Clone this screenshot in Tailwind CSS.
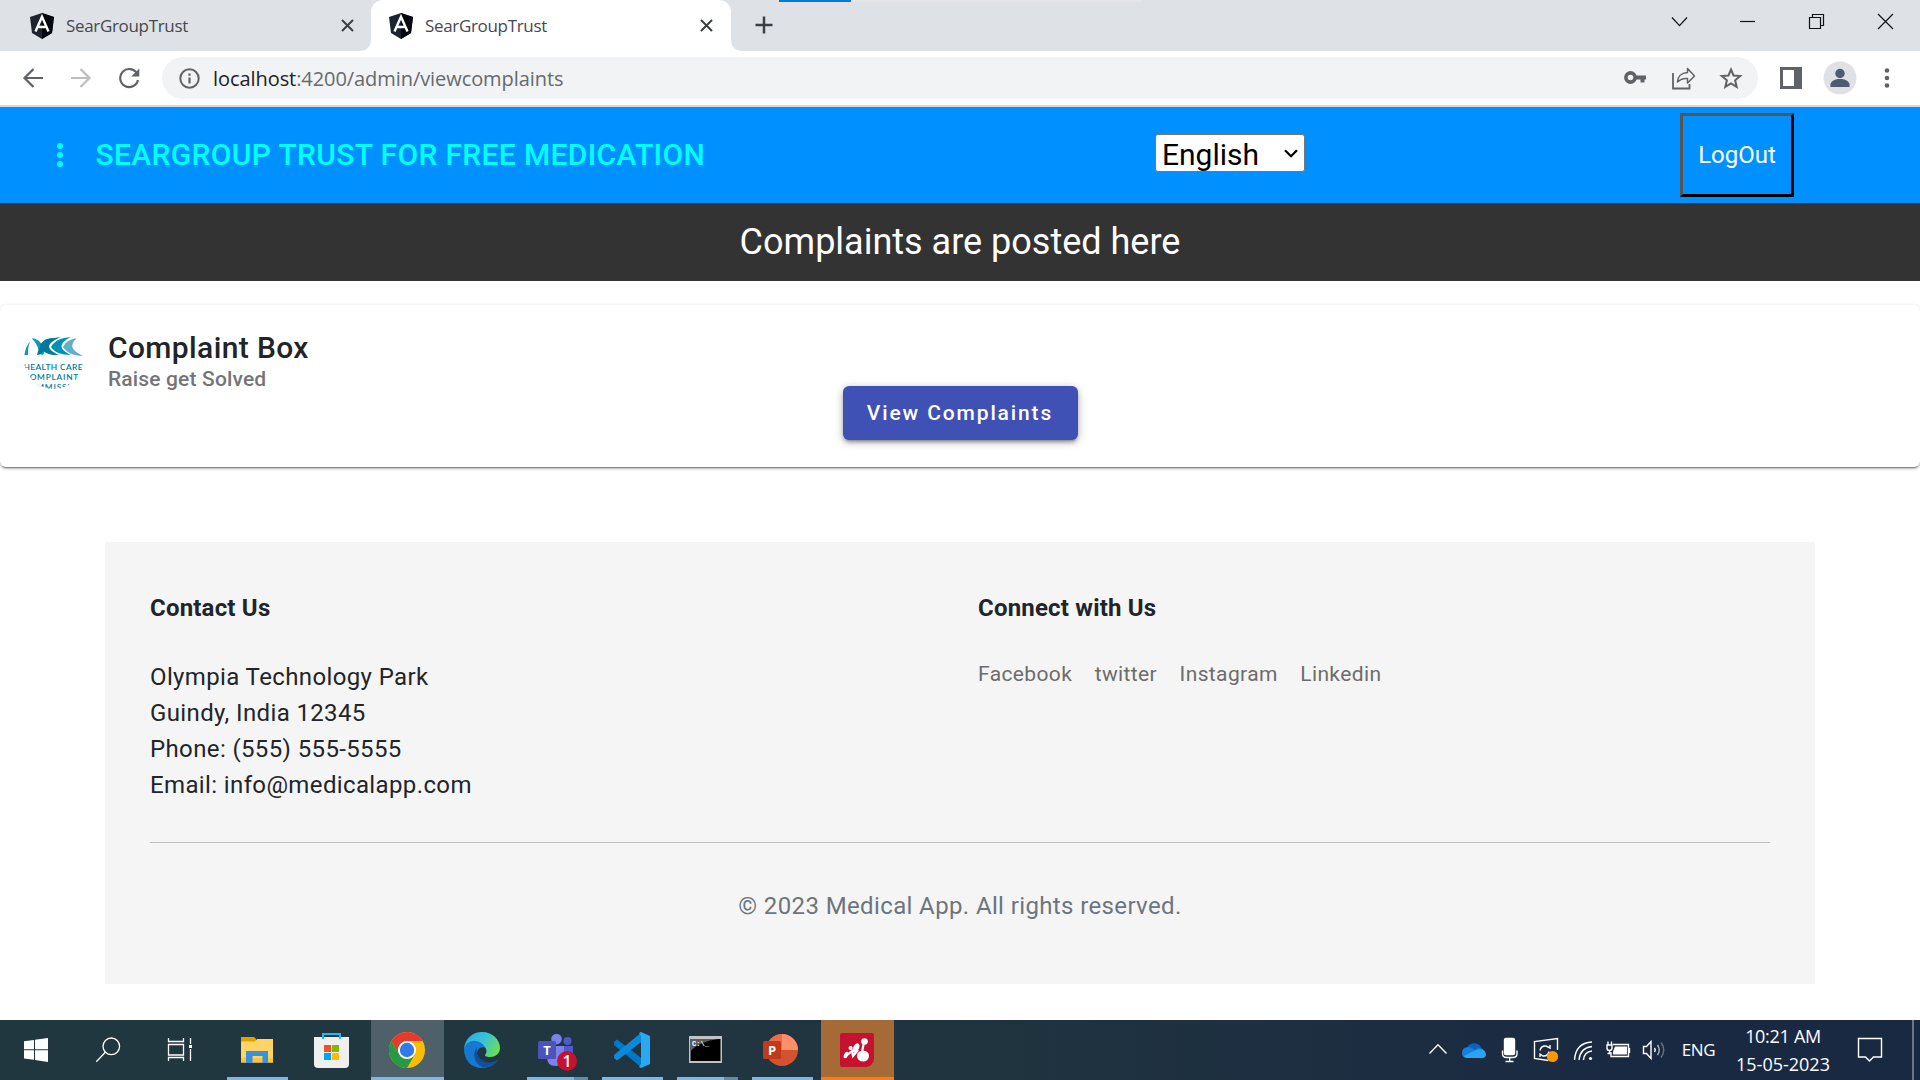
<!DOCTYPE html>
<html lang="en">
<head>
<meta charset="utf-8">
<title>SearGroupTrust</title>
<script src="https://cdn.jsdelivr.net/npm/@tailwindcss/browser@4"></script>
</head>
<body class="w-[1920px] h-[1080px] overflow-hidden bg-white font-[Roboto,sans-serif] text-[#212529] flex flex-col">

<!-- Tab strip -->
<header class="relative h-[51px] shrink-0 bg-[#dee1e6] flex font-['Open_Sans',sans-serif] text-[#45494d]">
  <div class="absolute left-[779px] top-0 h-0.5 w-[362px] bg-[#e6e6e8]"><div class="h-full w-[72px] bg-[#0078d7]"></div></div>
  <div class="w-[371px] pl-[30px] pr-4 flex items-center">
    <svg class="w-6 h-[26px] mt-px" viewBox="0 0 24 26"><path fill="#1c2430" d="M12 0 24 4 22 20 12 26 2 20 0 4z"/><path fill="#05070f" d="M12 0 24 4 22 20 12 26z"/><path fill="none" stroke="#fff" stroke-width="2.4" d="M5.500 18.500 12 3.800 18.500 18.500M8.500 14H15.500"/></svg>
    <span class="ml-3 text-[17px] tracking-[-0.33px] leading-6">SearGroupTrust</span>
    <svg class="ml-auto w-[15px] h-[15px]" viewBox="0 0 15 15"><path stroke="#3c4043" stroke-width="2" d="m2 2 11 11M13 2 2 13"/></svg>
  </div>
  <div class="relative w-[360px] pl-[18px] pr-[17px] flex items-center bg-white rounded-t-xl">
    <svg class="absolute -left-3 bottom-0 w-3 h-3" viewBox="0 0 12 12"><path fill="#fff" d="M12 0v12H0Q12 12 12 0"/></svg>
    <svg class="absolute -right-3 bottom-0 w-3 h-3" viewBox="0 0 12 12"><path fill="#fff" d="M0 0v12h12Q0 12 0 0"/></svg>
    <svg class="w-6 h-[26px] mt-px" viewBox="0 0 24 26"><path fill="#1c2430" d="M12 0 24 4 22 20 12 26 2 20 0 4z"/><path fill="#05070f" d="M12 0 24 4 22 20 12 26z"/><path fill="none" stroke="#fff" stroke-width="2.4" d="M5.500 18.500 12 3.800 18.500 18.500M8.500 14H15.500"/></svg>
    <span class="ml-3 text-[17px] tracking-[-0.33px] leading-6">SearGroupTrust</span>
    <svg class="ml-auto w-[15px] h-[15px]" viewBox="0 0 15 15"><path stroke="#3c4043" stroke-width="2" d="m2 2 11 11M13 2 2 13"/></svg>
  </div>
  <svg class="ml-[24px] mt-[16px] w-[18px] h-[18px]" viewBox="0 0 18 18"><path stroke="#3c4043" stroke-width="2.500" d="M9 .5v17M.5 9h17"/></svg>
  <svg class="ml-auto w-[258px] h-[51px]" viewBox="1662 0 258 51" fill="none" stroke="#111" stroke-width="1.200"><path d="m1672 17.500 7.500 8.200 7.500-8.200"/><path d="M1740 21.500h15"/><path d="M1809.500 17.500h11v11h-11zM1812.500 17.500v-3h11v11h-3"/><path d="m1878 14 15 15m0-15-15 15"/></svg>
</header>

<!-- Toolbar -->
<div class="h-[56px] shrink-0 bg-white border-b-2 border-[#d8d8da] flex items-center pl-[22px] pr-[26px]">
  <svg class="w-[118px] h-[22px]" viewBox="22 67 118 22" fill="none" stroke-width="2.200"><path stroke="#5f6368" d="M43 78H25M33.500 69 24.500 78l9 9"/><path stroke="#bbbdc0" d="M71 78h18M80.500 69l9 9-9 9"/><path stroke="#5f6368" d="M137 73.500a9 9 0 1 0 1 6.500"/><path fill="#5f6368" d="M139.300 68.500v8h-8z"/></svg>
  <div class="ml-[22px] w-[1596px] h-[42px] rounded-full bg-[#f1f3f4] flex items-center pl-[17px] pr-[15px]">
    <svg class="w-[21px] h-[21px]" viewBox="0 0 21 21"><circle cx="10.500" cy="10.500" r="9.200" fill="none" stroke="#5f6368" stroke-width="2"/><path stroke="#5f6368" stroke-width="2.200" d="M10.500 9.500V15.500M10.500 5.500V7.700"/></svg>
    <span class="ml-[13px] mt-0.5 font-['Open_Sans',sans-serif] text-[20px] leading-7 tracking-[-0.07px] text-[#666a6e]"><span class="text-[#202124]">localhost</span>:4200/admin/viewcomplaints</span>
    <svg class="ml-auto w-[120px] h-[24px]" viewBox="1623 66 120 24" fill="none" stroke="#5f6368" stroke-width="1.800"><circle cx="1630.500" cy="77.500" r="4.600" stroke-width="3.600"/><path stroke-width="4" d="M1635 77.500h11M1642.500 77v5.500"/><path d="M1673 73v15.500h16.500V84"/><path stroke-width="1.500" stroke-linejoin="round" d="M1687.500 68.500 1694.500 76l-7 7v-4.500c-4.500-.5-7.500 1-10 3.500 0-5 3.500-9 10-9.500z"/><path stroke-width="2" d="m1731 69.500 2.500 6 6.700.5-5.100 4.300 1.600 6.500-5.700-3.500-5.700 3.500 1.600-6.500-5.100-4.300 6.700-.5z"/></svg>
  </div>
  <svg class="ml-[21px] w-[24px] h-[24px]" viewBox="1779 66 24 24"><path fill="#5f6368" fill-rule="evenodd" d="M1780 67h22v22h-22zM1783 70v16h11V70z"/></svg>
  <svg class="ml-[20px] w-[34px] h-[34px]" viewBox="0 0 34 34"><circle cx="17" cy="17" r="16.500" fill="#dee1e6"/><circle cx="17" cy="12.500" r="4.700" fill="#4f5b70"/><path fill="#4f5b70" d="M7.500 26v-2.500c0-3.500 5-5.500 9.500-5.500s9.500 2 9.500 5.500V26z"/></svg>
  <svg class="ml-auto w-[14px] h-[24px]" viewBox="0 0 14 24" fill="#5f6368"><circle cx="7" cy="4.500" r="2.300"/><circle cx="7" cy="12" r="2.300"/><circle cx="7" cy="19.500" r="2.300"/></svg>
</div>

<!-- App bar -->
<nav class="h-24 shrink-0 bg-[#0090ff] flex items-center">
  <svg class="ml-[55px] w-[10px] h-[26px]" viewBox="0 0 10 26" fill="#00ffff"><circle cx="5" cy="4" r="3"/><circle cx="5" cy="13" r="3"/><circle cx="5" cy="22" r="3"/></svg>
  <div class="ml-[30.500px] w-[1059.500px] text-[30px] leading-9 tracking-[0.35px] font-medium text-[#00ffff]">SEARGROUP TRUST FOR FREE MEDICATION</div>
  <div class="w-[150px] h-[38px] mt-[-4px] bg-white border border-[#767676] rounded-[3px] flex items-center pl-[6px] pr-[6px] text-[30px] leading-[36px] text-black">
    <span class="mt-[3px]">English</span>
    <svg class="ml-auto w-[14px] h-[9px]" viewBox="0 0 14 9"><path fill="none" stroke="#000" stroke-width="2.200" d="m1 1.200 6 6 6-6"/></svg>
  </div>
  <button class="ml-[375px] w-[114px] h-[84px] border-[3px] border-t-[#555] border-l-[#555] border-r-black border-b-black text-white text-[24px]">LogOut</button>
</nav>
<div class="h-[78px] shrink-0 bg-[#333] text-white text-[36px] text-center leading-[78px]">Complaints are posted here</div>

<!-- Complaint card -->
<section class="mt-6 h-[162px] shrink-0 rounded-md bg-white shadow-[0_3px_1px_-2px_rgba(0,0,0,0.3),0_2px_2px_0_rgba(0,0,0,0.2),0_1px_4px_0_rgba(0,0,0,0.14)] px-6 pt-6">
  <div class="flex h-[57px]">
    <svg class="w-[60px] h-[60px] rounded-full" viewBox="24 329 60 60">
      <path fill="#1298b4" d="M24 355c1-9 3-12 6-13-2 4-2 8-2 13z"/>
      <path fill="#1298b4" d="M31 338c8 1 10 5 15 11l-3 6-4-1c0-6-3-12-8-16z"/>
      <path fill="#007a9c" d="M37 355c2-10 9-17 24-18-16 7-15 12-2 18-8 0-12-2-14-6-3 4-5 6-8 6z"/>
      <path fill="#007a9c" d="M40 345c4-6 8-7 14-7-9 7-6 13 3 17-9 0-15-3-17-10z"/>
      <path fill="#0092b4" d="M51 347c4-7 10-9 20-10-14 7-11 13 0 18-10 0-17-3-20-8z"/>
      <path fill="#62aec8" d="M63 347c3-6 8-8 14-9-8 7-6 12 6 18-10 0-17-4-20-9z"/>
      <g fill="#007a9c" font-family="Lato, sans-serif" font-size="8.300" text-anchor="middle" font-weight="600"><text x="53" y="370" textLength="59">HEALTH CARE</text><text x="53.500" y="380" textLength="60">COMPLAINTS</text><text x="53.500" y="390" textLength="62">COMMISSION</text></g>
    </svg>
    <div class="ml-6 font-medium">
      <div class="text-[30px] leading-[38px] tracking-[0.375px]">Complaint Box</div>
      <div class="text-[21px] leading-[24px] tracking-[0.15px] text-[#757575]">Raise get Solved</div>
    </div>
  </div>
  <div class="flex justify-center"><button class="w-[235px] h-[54px] pt-0.5 rounded-md bg-[#3f51b5] text-white font-medium text-[21px] tracking-[1.875px] shadow-[0_4px_2px_-3px_rgba(0,0,0,0.2),0_3px_3px_0_rgba(0,0,0,0.14),0_2px_8px_0_rgba(0,0,0,0.3)]">View Complaints</button></div>
</section>

<!-- Footer -->
<footer class="mt-[75px] mx-auto w-[1710px] h-[442px] shrink-0 bg-[#f5f5f5] px-[45px] tracking-[0.375px]">
  <div class="h-[301px] border-b border-[#bfc0c1] flex pt-[48px]">
    <div class="w-[828px]">
      <h2 class="text-[24px] leading-[36px] font-bold tracking-[0.2px]">Contact Us</h2>
      <p class="mt-[33px] text-[24px] leading-9">Olympia Technology Park<br>Guindy, India 12345<br>Phone: (555) 555-5555<br>Email: info@medicalapp.com</p>
    </div>
    <div>
      <h2 class="text-[24px] leading-[36px] font-bold tracking-[0.2px]">Connect with Us</h2>
      <div class="mt-[32px] flex gap-[22.500px] text-[21px] leading-8 text-[#6c6c6c]"><span>Facebook</span><span>twitter</span><span>Instagram</span><span>Linkedin</span></div>
    </div>
  </div>
  <p class="mt-[45px] text-center text-[24px] leading-9 text-[#6c757d]">© 2023 Medical App. All rights reserved.</p>
</footer>

<!-- Taskbar -->
<div class="mt-auto h-[60px] shrink-0 bg-linear-to-r from-[#21373f] from-20% via-[#20343f] via-50% to-[#1a2942] to-85% flex font-['Open_Sans',sans-serif] text-white">
  <svg class="w-[216px] h-[60px]" viewBox="0 1020 216 60" fill="none" stroke="#fff" stroke-width="1.300"><path fill="#fff" stroke="none" d="M24 1041.300l10-1.300v9.300H24zM35 1039.800l13-1.800v11.300H35zM24 1050.300h10v9.500l-10-1.300zM35 1050.300h13V1062l-13-2z"/><circle cx="111.300" cy="1046.300" r="8.300"/><path d="M105.300 1052.300 96.300 1061.700"/><path d="M168.500 1038v3.500h15V1038M168.500 1061v-3.500h15v3.500M168.500 1044.500h15v10.500h-15zM190.500 1038v6M190.500 1049v12"/><path stroke-width="3" d="M189 1046.500h3"/></svg>
  <div class="ml-[5px] flex gap-0.5">
    <div class="w-[73px] flex flex-col items-center"><svg class="-ml-px w-9 h-[57px]" viewBox="239 1020 36 57"><path fill="#e0a000" d="M241 1037h13l2 2v6h-15z"/><path fill="#ffd466" d="M241 1041.500h14l2-2.500h16v23.500h-32z"/><path fill="#f8c540" d="M241 1058h32v4.500h-32z"/><path fill="#3990dc" d="M246 1051h22v12h-5.500v-7h-10v7H246z"/></svg><div class="w-[61px] h-[3px] bg-[#76b9ed]"></div></div>
    <div class="w-[73px] flex flex-col items-center"><svg class="-ml-0.5 w-9 h-[57px]" viewBox="314 1020 36 57"><path fill="#efefef" d="M314 1037h35v27q0 4-4 4h-27q-4 0-4-4z"/><path fill="none" stroke="#2bb5f0" stroke-width="2" d="M323 1039v-5h17v5"/><path fill="#f25022" d="M324 1045h7v7h-7z"/><path fill="#7fba00" d="M332 1045h7v7h-7z"/><path fill="#00a4ef" d="M324 1053h7v7h-7z"/><path fill="#ffb900" d="M332 1053h7v7h-7z"/></svg></div>
    <div class="w-[73px] flex flex-col items-center bg-[#4e6068]"><svg class="-ml-px w-9 h-[57px]" viewBox="0 -12 36 57"><circle cx="18" cy="18" r="18" fill="#fbbc05"/><path fill="#e53b2f" d="M2.400 9A18 18 0 0 1 33.600 9H18a9 9 0 0 0-7.800 13.500z"/><path fill="#249a42" d="M2.400 9A18 18 0 0 0 18 36l7.800-13.500A9 9 0 0 1 10.200 22.500z"/><circle cx="18" cy="18" r="9" fill="#fff"/><circle cx="18" cy="18" r="7.200" fill="#2f7bee"/></svg><div class="w-full h-[3px] bg-[#76b9ed]"></div></div>
    <div class="w-[73px] flex flex-col items-center"><svg class="-ml-px w-9 h-[57px]" viewBox="0 -12 36 57"><defs><linearGradient id="eg" x1="0" x2="1" y1=".2" y2=".6"><stop stop-color="#2fa9e8"/><stop offset=".5" stop-color="#35c1dc"/><stop offset="1" stop-color="#6be052"/></linearGradient></defs><path fill="#1579d2" d="M0 17C1 9 8 6 15 8c6 2 8 6 7 8-4-2-9 0-9 6 0 7 7 10 13 9 3 0 6-2 8-3-4 6-10 8-16 8C7 36 0 28 0 17z"/><path fill="#10509e" d="M13 15c-5 6-3 16 5 20 7 1 13-2 16-7-4 2-8 3-12 2-7-2-10-8-9-15z"/><path fill="url(#eg)" d="M0 17C1 6 9 0 18 0c11 0 18 8 18 16 0 6-5 9-10 9-4 0-5-1-5-2 2-2 2-5 0-8C15 6 3 7 0 17z"/></svg></div>
    <div class="w-[73px] flex flex-col items-center"><svg class="-ml-px w-[40px] h-[57px]" viewBox="538 1020 40 57"><circle cx="557.500" cy="1039" r="5.300" fill="#7b83eb"/><circle cx="568.500" cy="1041" r="4" fill="#5059c9"/><path fill="#5059c9" d="M562 1046h12v9q0 6-6 6h-6z"/><path fill="#7b83eb" d="M548 1046h17v11q0 9-8.500 9t-8.500-9z"/><rect x="539" y="1041" width="18" height="18" rx="1.500" fill="#4b53bc"/><text x="548" y="1054.800" font-size="13" font-weight="700" text-anchor="middle" fill="#fff">T</text><circle cx="568" cy="1061" r="10" fill="#c4122f"/><text x="568" y="1067" font-size="16" font-weight="600" text-anchor="middle" fill="#fff">1</text></svg><div class="w-[61px] h-[3px] bg-[#76b9ed] flex justify-end"><div class="w-3.5 bg-[#5a8cb5]"></div></div></div>
    <div class="w-[73px] flex flex-col items-center"><svg class="-ml-px w-9 h-[57px]" viewBox="614 1020 36 57"><path fill="#0078c8" d="M614 1042l3-2.500 25 19v9.500L614 1045z"/><path fill="#0a8ad8" d="M614 1058l3 2.500 25-19V1032L614 1055z"/><path fill="#28a9f2" d="M641 1032 650 1036v28l-9 4-2-1 2-3v-28l-2-3z"/></svg><div class="w-[61px] h-[3px] bg-[#76b9ed]"></div></div>
    <div class="w-[73px] flex flex-col items-center"><svg class="-ml-[3px] w-[34px] h-[57px]" viewBox="690 1020 34 57"><path fill="#bfc3c5" d="M690 1036h33v27h-33z"/><path fill="#000" d="M691.500 1039h30v22h-30z"/><path fill="#5a5d5f" d="M691.500 1039h28q-18 2-28 12z"/><text x="693" y="1046" font-family="Liberation Mono, monospace" font-size="7" font-weight="700" fill="#fff" textLength="17">C:\_</text></svg><div class="w-[61px] h-[3px] bg-[#76b9ed] flex justify-end"><div class="w-3.5 bg-[#5a8cb5]"></div></div></div>
    <div class="w-[73px] flex flex-col items-center"><svg class="-ml-[3px] w-9 h-[57px]" viewBox="764 1020 36 57"><circle cx="783" cy="1050" r="16" fill="#d35230"/><path fill="#ff8f6b" d="M783 1034a16 16 0 0 1 16 16h-16z"/><path fill="#ed6c47" d="M783 1034a16 16 0 0 0-16 16h16z"/><rect x="764" y="1041" width="18" height="18" rx="1.500" fill="#c13b1b"/><text x="773" y="1055" font-size="13" font-weight="700" text-anchor="middle" fill="#fff">P</text></svg><div class="w-[61px] h-[3px] bg-[#76b9ed]"></div></div>
    <div class="w-[73px] flex flex-col items-center bg-[#a56a35]"><svg class="-ml-px w-[34px] h-[57px]" viewBox="840 1020 34 57"><path fill="#c4122f" d="M842 1033h30q2 0 2 2v24q-1 7-8 8h-24q-2 0-2-2v-30q0-2 2-2z"/><g fill="#fff"><circle cx="864.500" cy="1041.500" r="3.300"/><ellipse cx="863" cy="1056" rx="6" ry="5.500"/><ellipse cx="856" cy="1048" rx="2.800" ry="5" transform="rotate(25 856 1048)"/><circle cx="850.500" cy="1048" r="2"/><ellipse cx="846" cy="1055" rx="2" ry="3.500" transform="rotate(25 846 1055)"/></g><path stroke="#fff" stroke-width="2.200" fill="none" d="m864 1042-2 10M846 1056l6-5 1 5 5-6"/></svg><div class="w-full h-[3px] bg-[#ff7b0a]"></div></div>
  </div>
  <svg class="ml-auto w-[252px] h-[60px]" viewBox="1420 1020 252 60" fill="none" stroke="#fff" stroke-width="1.400">
    <path d="m1429.500 1053.500 8.500-8.800 8.500 8.800"/>
    <g stroke="none"><path fill="#0a64bf" d="M1467 1048a8 8 0 0 1 14-1l-4 6z"/><path fill="#1482dc" d="M1462 1053q0-6 7-6l10 5-4 6h-8q-5 0-5-5z"/><path fill="#1482dc" d="M1476 1049q6-3 9 3l-8 4z"/><path fill="#29a4ee" d="M1464 1056l12-6q9-2 10 4 0 4-4 4h-15q-2 0-3-2z"/></g>
    <rect x="1504.500" y="1038.500" width="10" height="16" rx="1.500" fill="#fff"/><path d="M1502.500 1050.500v3q0 4 4 4h6.500q4 0 4-4v-3M1509.700 1057v4M1505.500 1061.500h8"/>
    <path d="M1557.500 1050v-11.500l-23 3V1058.500l14 2M1540 1050.500q1-5 6-4.500l4 2v-3M1549 1051.500q-1 5-6 4.500l-3-2v3"/><circle cx="1552.500" cy="1056.500" r="5.600" fill="#ff9800" stroke="none"/>
    <path d="M1574.500 1060q1-17 17.500-18M1579 1060q1-12 13-13.500M1583.500 1060q.5-8 8.500-9"/><circle cx="1590.500" cy="1058.500" r="1.600" fill="#fff" stroke="none"/>
    <path d="M1613 1044.500h15.500v12H1611V1052M1629.500 1048v5M1607 1045h5v3q0 2.500-2.500 2.500T1607 1048zM1608 1041.500v3M1611.500 1041.500v3M1609.500 1050.500v3h-2"/><path fill="#fff" stroke="none" d="M1615 1046.500h12v8h-14v-3z"/>
    <path d="M1643.500 1046.500h3l4.500-5v17l-4.500-5h-3zM1654.500 1048q1.500 2 0 4"/><path stroke="#aab0bd" d="M1657.500 1045q3.500 5 0 10"/><path stroke="#667086" d="M1661 1042.500q5.500 7.500 0 15"/>
  </svg>
  <div class="w-[53px] text-center text-[17px] leading-[60px] tracking-[-0.4px]">ENG</div>
  <div class="w-[116px] text-center text-[18px] leading-[28px] pt-[2px]"><span class="tracking-[-0.3px]">10:21 AM</span><br>15-05-2023</div>
  <svg class="w-[58px] h-[60px]" viewBox="1841 1020 58 60"><path fill="none" stroke="#fff" stroke-width="1.400" d="M1858.500 1038.500h23v18.500h-8l-4 4-4-4h-7z"/></svg>
  <div class="ml-[13px] mr-[6px] w-0.5 bg-[#6b7587]"></div>
</div>
</body>
</html>
